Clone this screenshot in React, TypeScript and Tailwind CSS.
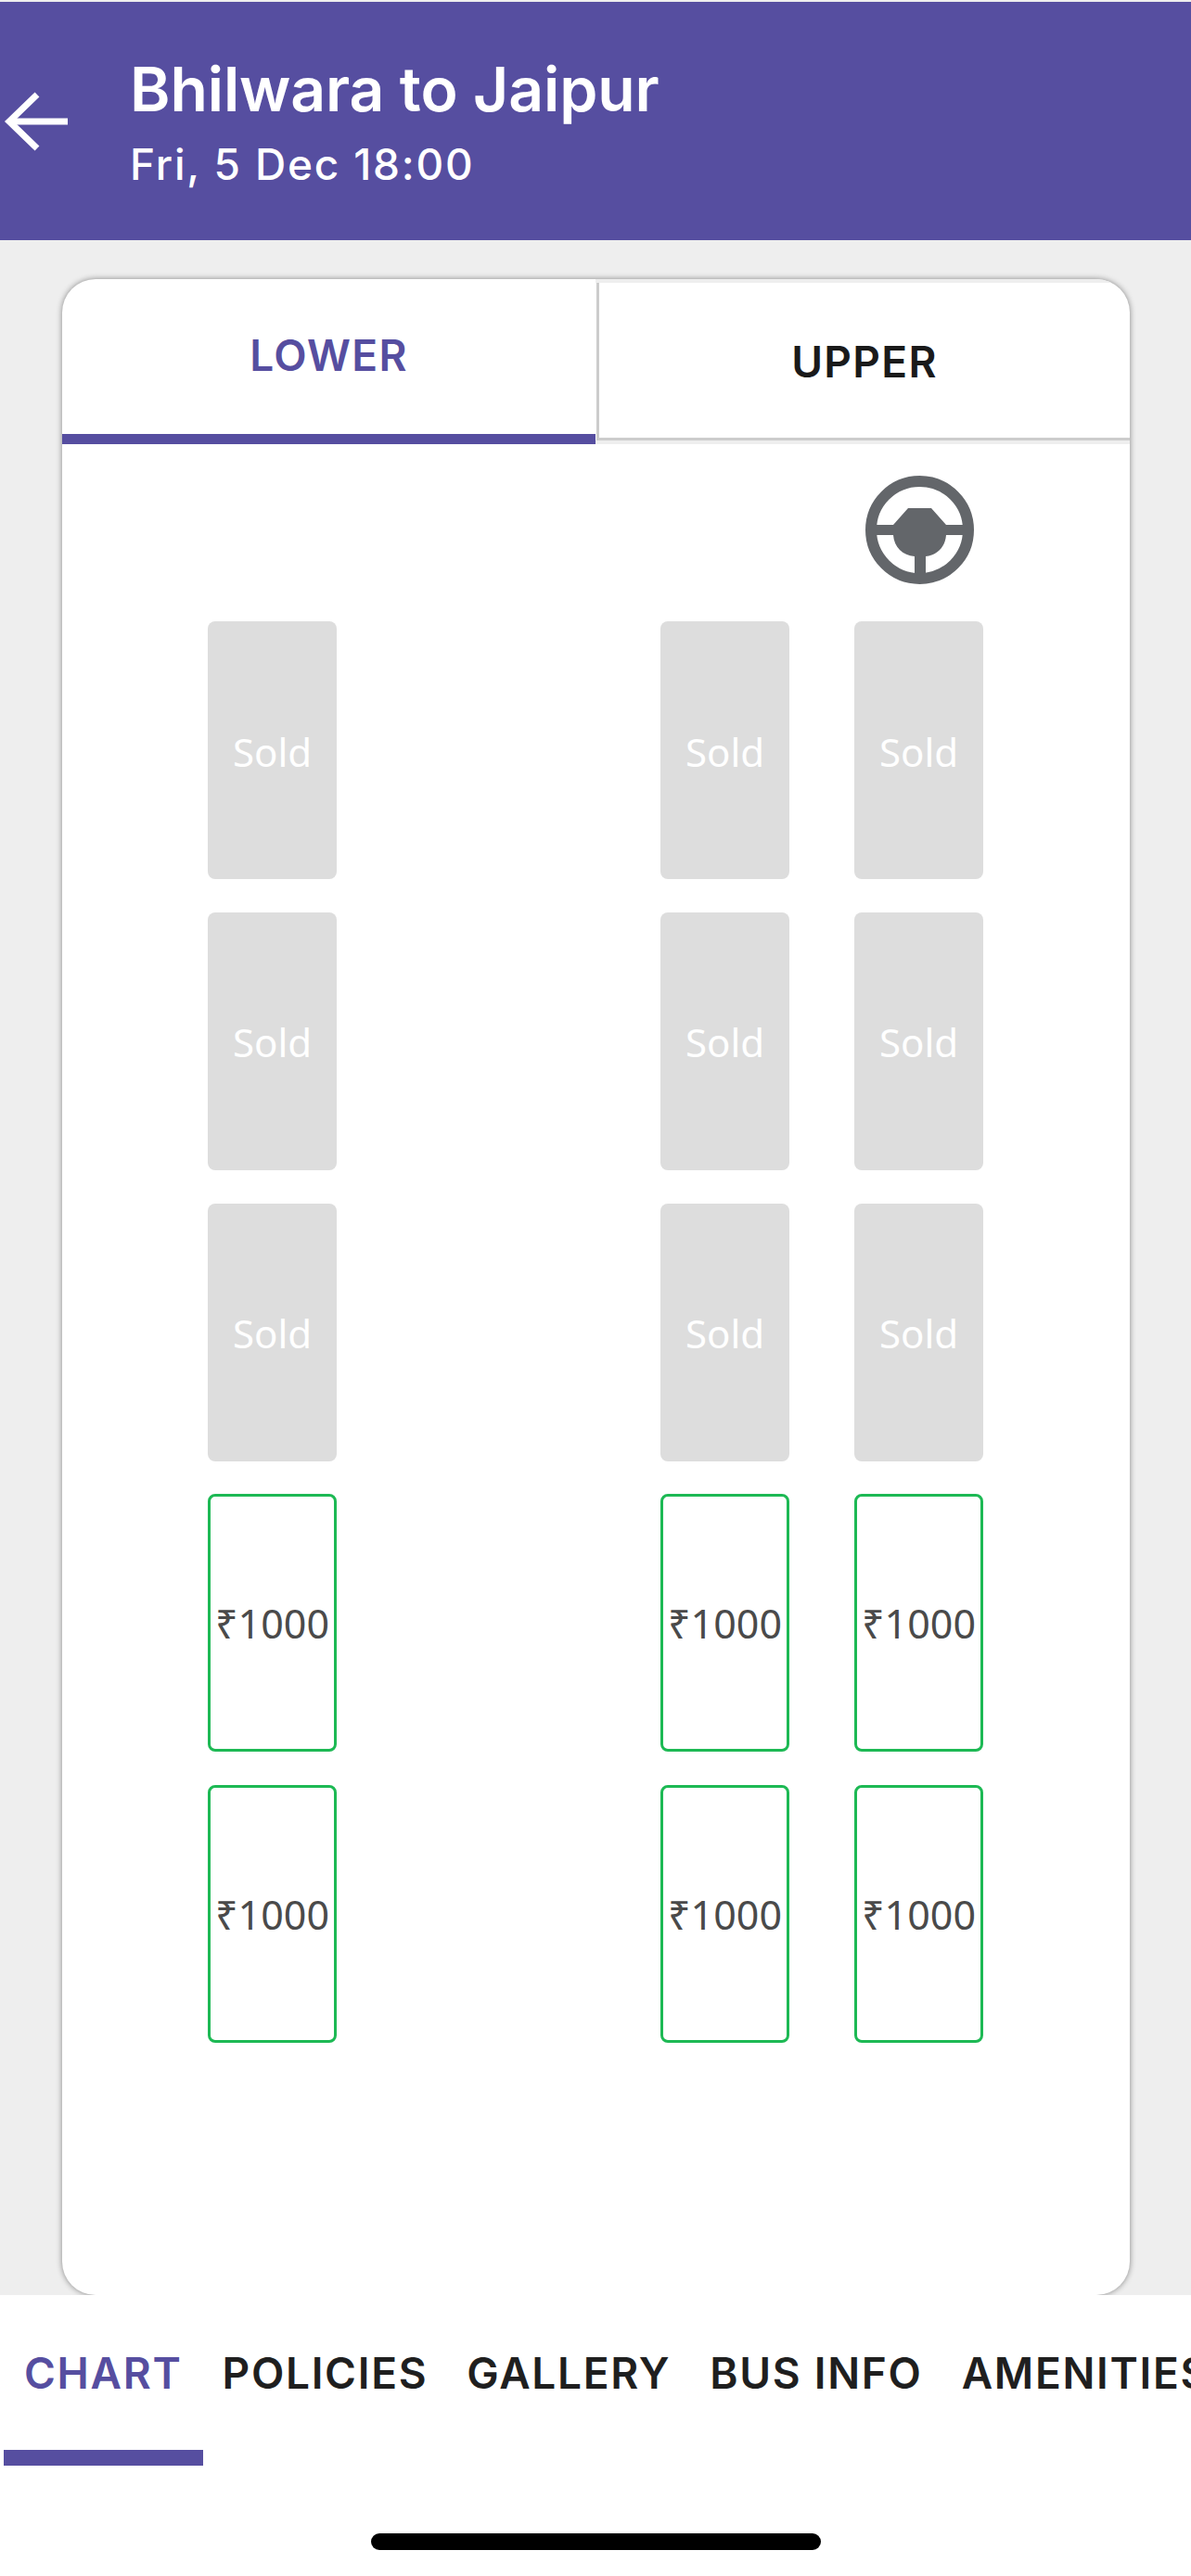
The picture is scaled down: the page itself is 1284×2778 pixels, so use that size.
import React from 'react';

const PURPLE = 'text-[#564ea0]';

/* arrow in the header */
const BackArrow = () => (
  <svg width="72" height="68" viewBox="0 0 72 68" fill="none" stroke="#fff" strokeWidth="7" className="shrink-0">
    <path d="M71 34H8" />
    <path d="M38 5 8 34l30 29" strokeLinejoin="miter" />
  </svg>
);

const SteeringWheel = () => (
  <svg width="117" height="117" viewBox="0 0 117 117" className="block">
    <circle cx="58.5" cy="58.5" r="52.5" fill="none" stroke="#63666a" strokeWidth="12" />
    <path
      d="M46 35h25l16 18h24v11H87c-1 13-10 22-22 23v24H53V87c-13-1-22-10-23-23H6V53h24z"
      fill="#63666a"
    />
  </svg>
);

const Seat: React.FC<{ sold?: boolean }> = ({ sold }) =>
  sold ? (
    <div className="w-[139px] h-[278px] rounded-[8px] bg-[#dddddd] flex items-center justify-center pt-[2px] text-white text-[42px] font-['Noto_Sans',sans-serif]">
      Sold
    </div>
  ) : (
    <div className="w-[139px] h-[278px] rounded-[8px] border-[3px] border-[#1db954] bg-white flex items-center justify-center pt-[2px] text-[#4a4a4a] text-[43px] font-['Noto_Sans',sans-serif] whitespace-nowrap">
      ₹1000
    </div>
  );

const SeatRow: React.FC<{ sold?: boolean }> = ({ sold }) => (
  <div className="flex">
    <Seat sold={sold} />
    <div className="w-[349px]" />
    <Seat sold={sold} />
    <div className="w-[70px]" />
    <Seat sold={sold} />
  </div>
);

const bottomTabs = ['POLICIES', 'GALLERY', 'BUS INFO', 'AMENITIES'];

export default function App() {
  return (
    <div className="w-[1284px] h-[2778px] flex flex-col overflow-hidden bg-[#eeeeee] font-['Inter',sans-serif]">
      {/* header */}
      <header className="h-[257px] shrink-0 mt-[2px] bg-[#564ea0] flex items-center text-white">
        <div className="ml-[2px] mt-[1px] w-[138px]">
          <BackArrow />
        </div>
        <div className="mt-[12px]">
          <h1 className="text-[66px] leading-[80px] font-semibold -tracking-[0.1px]">Bhilwara to Jaipur</h1>
          <p className="text-[46px] leading-[82px] font-medium tracking-[1.8px]">Fri, 5 Dec 18:00</p>
        </div>
      </header>

      {/* seat chart card */}
      <main className="flex-1 min-h-0 pt-[42px] pl-[67px] pr-[66px]">
        <div className="h-full rounded-[36px] bg-white shadow-[0_0_6px_rgba(0,0,0,0.45)] overflow-hidden flex flex-col">
          <div className="flex h-[178px] shrink-0">
            <div className={`w-[575px] border-b-[11px] border-[#564ea0] flex items-center justify-center pb-[2px] text-[46px] font-semibold tracking-[1.3px] ${PURPLE}`}>
              LOWER
            </div>
            <div className="flex-1 flex flex-col">
              <div className="h-[4px] bg-[#eeeeee]" />
              <div className="flex-1 ml-[1px] border-l-[3px] border-b-[3px] border-[#cccccc] flex items-center justify-center pt-[3px] text-[46px] font-semibold tracking-[1.3px] text-[#1a1a1a]">
                UPPER
              </div>
              <div className="h-[4px] bg-[#eeeeee]" />
            </div>
          </div>

          <div className="pl-[157px] flex flex-col">
            <div className="pl-[709px] pt-[34px] pb-[40px]">
              <SteeringWheel />
            </div>
            <div className="flex flex-col gap-[35.75px]">
              <SeatRow sold />
              <SeatRow sold />
              <SeatRow sold />
              <SeatRow />
              <SeatRow />
            </div>
          </div>
        </div>
      </main>

      {/* bottom tabs */}
      <nav className="relative h-[303px] shrink-0 bg-white overflow-hidden pt-[44px]">
        <div className="flex pl-[4px] whitespace-nowrap text-[46px] leading-[80px] font-semibold tracking-[1.7px] text-[#1f1f1f]">
          <div className={`px-[22px] h-[140px] border-b-[17px] border-[#564ea0] ${PURPLE}`}>CHART</div>
          {bottomTabs.map((tab) => (
            <div key={tab} className="px-[21px]">
              {tab}
            </div>
          ))}
        </div>
        <div className="mt-[73px] mx-auto w-[485px] h-[18px] rounded-full bg-black" />
      </nav>
    </div>
  );
}
